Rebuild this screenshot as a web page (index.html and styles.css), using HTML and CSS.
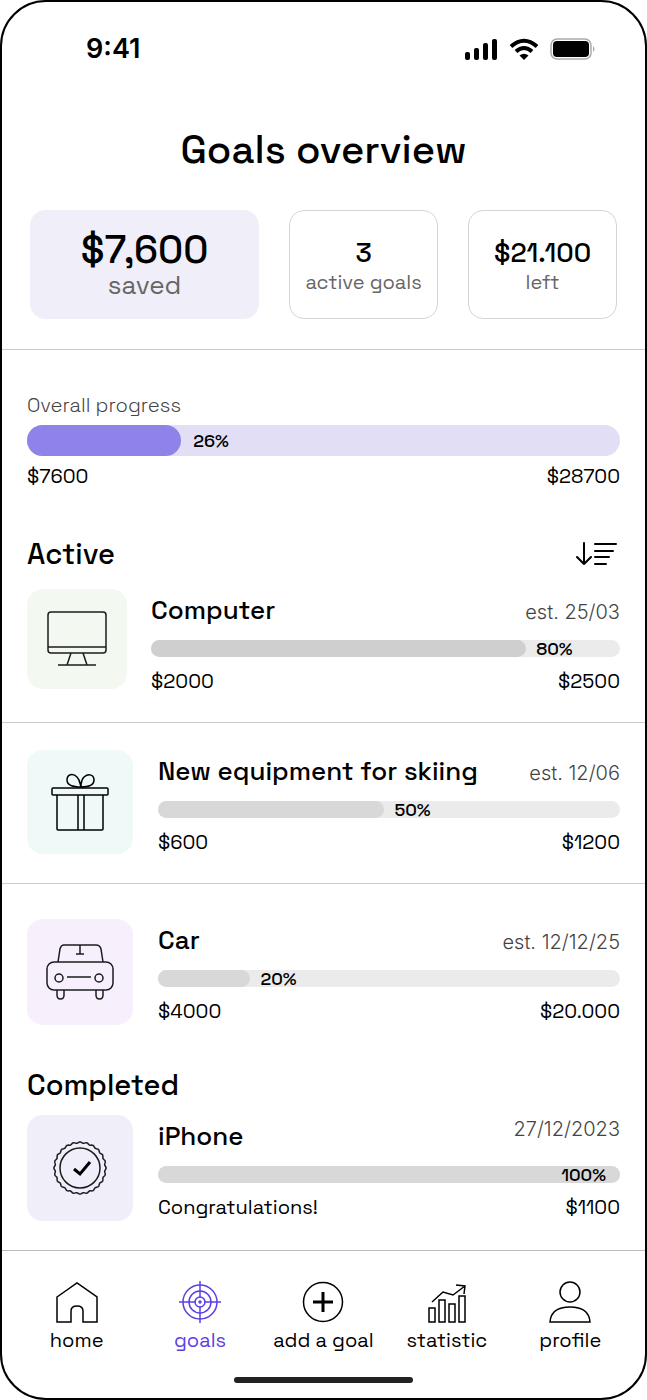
FILE: index.html
```html
<!DOCTYPE html>
<html lang="en">
<head>
    <meta charset="UTF-8">
    <meta name="viewport" content="width=device-width, initial-scale=1.0">
    <title>Goals overview</title>
    <link rel="stylesheet" href="styles.css">
</head>
<body>
    <div class="phone">
        <header class="status">
            <span class="time">9:41</span>
            <div class="status-icons">
                <svg width="34" height="22" viewBox="0 0 34 22">
                    <rect x="1" y="14" width="5" height="8" rx="2"/>
                    <rect x="10" y="10" width="5" height="12" rx="2"/>
                    <rect x="19" y="5" width="5" height="17" rx="2"/>
                    <rect x="28" y="1" width="5" height="21" rx="2"/>
                </svg>
                <svg width="30" height="22" viewBox="0 0 30 22" fill="none" stroke="#000" stroke-width="4">
                    <path d="M2 8.500Q15-3 28 8.500M7 13.500Q15 6.500 23 13.500"/>
                    <path d="M10.500 17.500Q15 14 19.500 17.500L15 22z" fill="#000" stroke="none"/>
                </svg>
                <svg width="46" height="22" viewBox="0 0 46 22">
                    <rect x="1" y="1" width="40" height="20" rx="6" fill="none" stroke="#aaa" stroke-width="1.500"/>
                    <rect x="3" y="3" width="36" height="16" rx="4"/>
                    <path d="M43 8q3 3 0 6z" fill="#aaa"/>
                </svg>
            </div>
        </header>

        <main>
            <h1>Goals overview</h1>

            <section class="cards">
                <div class="card card-main">
                    <strong>$7,600</strong>
                    <span>saved</span>
                </div>
                <div class="card">
                    <strong>3</strong>
                    <span>active goals</span>
                </div>
                <div class="card">
                    <strong>$21.100</strong>
                    <span>left</span>
                </div>
            </section>

            <section class="overall">
                <p class="label">Overall progress</p>
                <div class="bar bar-big">
                    <div class="fill" style="width: 26%"></div>
                    <span>26%</span>
                </div>
                <div class="values"><span>$7600</span><span>$28700</span></div>
            </section>

            <section>
                <div class="section-head">
                    <h2>Active</h2>
                    <button class="sort" type="button" aria-label="Sort goals">
                        <svg width="42" height="24" viewBox="0 0 42 24" fill="none" stroke="#000" stroke-width="2" stroke-linecap="round" stroke-linejoin="round">
                            <path d="M8 1v21M1 15l7 7 7-7M19 2h21M19 9h18M19 15h14M19 22h11"/>
                        </svg>
                    </button>
                </div>

                <article class="goal goal-first">
                    <div class="icon green">
                        <svg width="62" height="58" viewBox="0 0 62 58" fill="none" stroke="#1c1c1c" stroke-width="1.500">
                            <rect x="2" y="2" width="58" height="41" rx="3"/>
                            <path d="M2 37h58M25 43l-4 12M37 43l4 12M12 55h38"/>
                        </svg>
                    </div>
                    <div class="info">
                        <div class="top"><h3>Computer</h3><time>est. 25/03</time></div>
                        <div class="bar dark">
                            <div class="fill" style="width: 80%"></div>
                            <span>80%</span>
                        </div>
                        <div class="values"><span>$2000</span><span>$2500</span></div>
                    </div>
                </article>

                <article class="goal goal-line">
                    <div class="icon mint">
                        <svg width="58" height="58" viewBox="0 0 58 58" fill="none" stroke="#000" stroke-width="1.500">
                            <rect x="1" y="15" width="56" height="7" rx="1"/>
                            <path d="M6 22v34q0 1 1 1h44q1 0 1-1V22M27 22v35M33 22v35"/>
                            <path d="M30 14C22 14 16 12 16 7C16 1 22 0 26 4C29 7 29 11 30 14C30 11 30 7 33 4C38 0 43 2 43 7C43 12 37 14 30 14z"/>
                        </svg>
                    </div>
                    <div class="info">
                        <div class="top"><h3>New equipment for skiing</h3><time>est. 12/06</time></div>
                        <div class="bar">
                            <div class="fill" style="width: 49%"></div>
                            <span>50%</span>
                        </div>
                        <div class="values"><span>$600</span><span>$1200</span></div>
                    </div>
                </article>

                <article class="goal goal-last">
                    <div class="icon pink">
                        <svg width="68" height="56" viewBox="0 0 68 56" fill="none" stroke="#1c1c1c" stroke-width="1.500">
                            <path d="M12 18l2-13q1-4 4-4h32q4 0 5 4l2 13M34 1v9M30 10h8"/>
                            <rect x="1" y="18" width="66" height="28" rx="7"/>
                            <circle cx="13" cy="34" r="4"/>
                            <circle cx="53" cy="34" r="4"/>
                            <path d="M21 33h24M11 46v5q0 4 3.500 4t3.500-4v-5M50 46v5q0 4 3.500 4t3.500-4v-5"/>
                        </svg>
                    </div>
                    <div class="info">
                        <div class="top"><h3>Car</h3><time>est. 12/12/25</time></div>
                        <div class="bar">
                            <div class="fill" style="width: 20%"></div>
                            <span>20%</span>
                        </div>
                        <div class="values"><span>$4000</span><span>$20.000</span></div>
                    </div>
                </article>
            </section>

            <section>
                <div class="section-head completed">
                    <h2>Completed</h2>
                </div>
                <article class="goal done">
                    <div class="icon blue">
                        <svg width="56" height="56" viewBox="0 0 56 56" fill="none" stroke="#1c1c1c" stroke-width="1.500">
                            <path id="badge"/>
                            <circle cx="28" cy="28" r="20"/>
                            <path d="M22 29l6 5 10-12" stroke="#000" stroke-width="3"/>
                        </svg>
                    </div>
                    <div class="info">
                        <div class="top"><h3>iPhone</h3><time>27/12/2023</time></div>
                        <div class="bar">
                            <div class="fill" style="width: 100%"><span>100%</span></div>
                        </div>
                        <div class="values"><span>Congratulations!</span><span>$1100</span></div>
                    </div>
                </article>
            </section>
        </main>

        <nav>
            <a href="#home">
                <svg width="44" height="44" viewBox="0 0 44 44">
                    <path d="M2 16L22 2l20 14v25H28V30q0-5-6-5t-6 5v11H2z"/>
                </svg>
                home
            </a>
            <a href="#goals" class="on">
                <svg width="44" height="44" viewBox="0 0 44 44">
                    <circle cx="22" cy="21" r="17"/>
                    <circle cx="22" cy="21" r="11"/>
                    <circle cx="22" cy="21" r="5"/>
                    <circle cx="22" cy="21" r="1"/>
                    <path d="M22 0v17M22 25v17M1 21h17M26 21h17"/>
                </svg>
                goals
            </a>
            <a href="#add">
                <svg width="44" height="44" viewBox="0 0 44 44">
                    <circle cx="22" cy="21" r="19.500"/>
                    <path d="M22 11v20M12 21h20" stroke-width="3"/>
                </svg>
                add a goal
            </a>
            <a href="#statistic">
                <svg width="44" height="44" viewBox="0 0 44 44">
                    <path d="M4 27h6v14H4zM14 19h6v22h-6zM24 23h6v18h-6zM34 15h6v26h-6z"/>
                    <path d="M7 21l11-10 10 3 12-9M31 4l9 1-1 8"/>
                </svg>
                statistic
            </a>
            <a href="#profile">
                <svg width="44" height="44" viewBox="0 0 44 44">
                    <circle cx="22" cy="11" r="10"/>
                    <path d="M2 41q1-15 20-15t20 15z"/>
                </svg>
                profile
            </a>
        </nav>
        <div class="home-line"></div>
    </div>

    <script>
        // wavy edge of the badge
        const badge = document.getElementById("badge");
        let d = "";
        for (let i = 0; i < 240; i++) {
            const a = i / 240 * Math.PI * 2;
            const r = 25.5 + Math.cos(a * 24) * 0.6;
            d += (i ? "L" : "M") + (28 + r * Math.cos(a)).toFixed(2) + " " + (28 + r * Math.sin(a)).toFixed(2);
        }
        badge.setAttribute("d", d + "z");
    </script>
</body>
</html>
```

FILE: styles.css
```css
*{
    box-sizing: border-box;
    margin: 0;
    padding: 0;
}
body{
    background-color: #fff;
    color: #000;
    font-family: "Space Grotesk", Inter, sans-serif;
}
.phone{
    min-height: 100vh;
    border: 2px solid #000;
    border-radius: 46px;
    overflow: hidden;
    display: flex;
    flex-direction: column;
}
.status{
    display: flex;
    justify-content: space-between;
    align-items: center;
    padding: 32px 49px 0 84px;
}
.time{
    font-family: Inter, sans-serif;
    font-size: 27px;
    line-height: 30px;
    font-weight: 600;
}
.status-icons{
    display: flex;
    gap: 11px;
}
main{
    flex: 1;
}
h1{
    margin-top: 61px;
    font-size: 40px;
    line-height: 50px;
    font-weight: 500;
    text-align: center;
}
h2{
    font-size: 29px;
    line-height: 36px;
    font-weight: 500;
}
h3{
    font-size: 26px;
    line-height: 30px;
    font-weight: 500;
}

/* cards */
.cards{
    display: grid;
    grid-template-columns: 20fr 13fr 13fr;
    gap: 30px;
    padding: 35px 28px 30px;
    border-bottom: 1px solid #ccc;
}
.card{
    height: 109px;
    padding-top: 4px;
    border: 1px solid #d4d4d4;
    border-radius: 15px;
    display: flex;
    flex-direction: column;
    align-items: center;
    justify-content: center;
}
.card strong{
    font-size: 27px;
    line-height: 30px;
    font-weight: 500;
}
.card span{
    font-size: 20px;
    line-height: 28px;
    color: #666;
    white-space: nowrap;
}
.card-main{
    padding-top: 0;
    background-color: #efeef9;
    border-color: #efeef9;
}
.card-main strong{
    font-size: 39px;
    line-height: 40px;
}
.card-main span{
    font-size: 26px;
    line-height: 30px;
}

/* progress */
.overall{
    padding: 43px 25px 0;
}
.label{
    font-size: 20px;
    line-height: 24px;
    font-weight: 300;
    color: #444;
    margin-bottom: 8px;
}
.bar{
    display: flex;
    align-items: center;
    gap: 10px;
    height: 17px;
    border-radius: 9px;
    background-color: #ebebeb;
    font-size: 18px;
    line-height: 17px;
    font-weight: 500;
}
.fill{
    height: 100%;
    border-radius: 9px;
    background-color: #d8d8d8;
}
.dark .fill{
    background-color: #cfcfcf;
}
.done .fill{
    text-align: right;
    padding-right: 14px;
}
.bar-big{
    gap: 12px;
    height: 31px;
    border-radius: 16px;
    background-color: #e1def6;
}
.bar-big .fill{
    border-radius: 16px;
    background-color: #8f83e9;
}
.values{
    display: flex;
    justify-content: space-between;
    margin-top: 12px;
    font-size: 20px;
    line-height: 24px;
}
.overall .values{
    margin-top: 8px;
}

/* goals */
.section-head{
    display: flex;
    justify-content: space-between;
    align-items: center;
    padding: 48px 27px 17px 25px;
}
.completed{
    padding: 42px 25px 12px;
}
.sort{
    border: none;
    background: none;
    display: flex;
}
.goal{
    display: flex;
    gap: 25px;
    padding: 27px 25px 29px;
}
.goal-first{
    gap: 24px;
    padding-top: 0;
}
.goal-line{
    border-top: 1px solid #ccc;
    border-bottom: 1px solid #ccc;
}
.goal-last{
    padding: 35px 25px 0;
}
.done{
    padding: 0 25px 28px;
}
.icon{
    flex: none;
    width: 106px;
    height: 106px;
    border-radius: 16px;
    display: flex;
    align-items: center;
    justify-content: center;
}
.green{
    width: 100px;
    height: 100px;
    background-color: #f3f8f1;
}
.mint{
    height: 104px;
    background-color: #eef9f8;
}
.pink{
    background-color: #f7f0fc;
}
.blue{
    background-color: #efeef9;
}
.info{
    flex: 1;
    padding-top: 6px;
}
.top{
    display: flex;
    justify-content: space-between;
    align-items: baseline;
    height: 30px;
    margin-bottom: 15px;
}
.top time{
    font-family: Inter, sans-serif;
    font-size: 20px;
    line-height: 24px;
    font-weight: 300;
    color: #444;
}
.done .top{
    align-items: flex-start;
}
.done time{
    line-height: 16px;
}

/* bottom menu */
nav{
    display: grid;
    grid-template-columns: repeat(5, 1fr);
    padding: 30px 13px 0;
    border-top: 1px solid #bbb;
}
nav a{
    display: flex;
    flex-direction: column;
    align-items: center;
    font-size: 20px;
    line-height: 24px;
    color: #000;
    text-decoration: none;
    white-space: nowrap;
}
nav svg{
    margin-bottom: 3px;
    fill: none;
    stroke: currentColor;
    stroke-width: 1.5;
}
nav .on{
    color: #5b40e6;
}
.home-line{
    width: 179px;
    height: 6px;
    margin: 25px auto 15px;
    border-radius: 3px;
    background-color: #222;
}
```
